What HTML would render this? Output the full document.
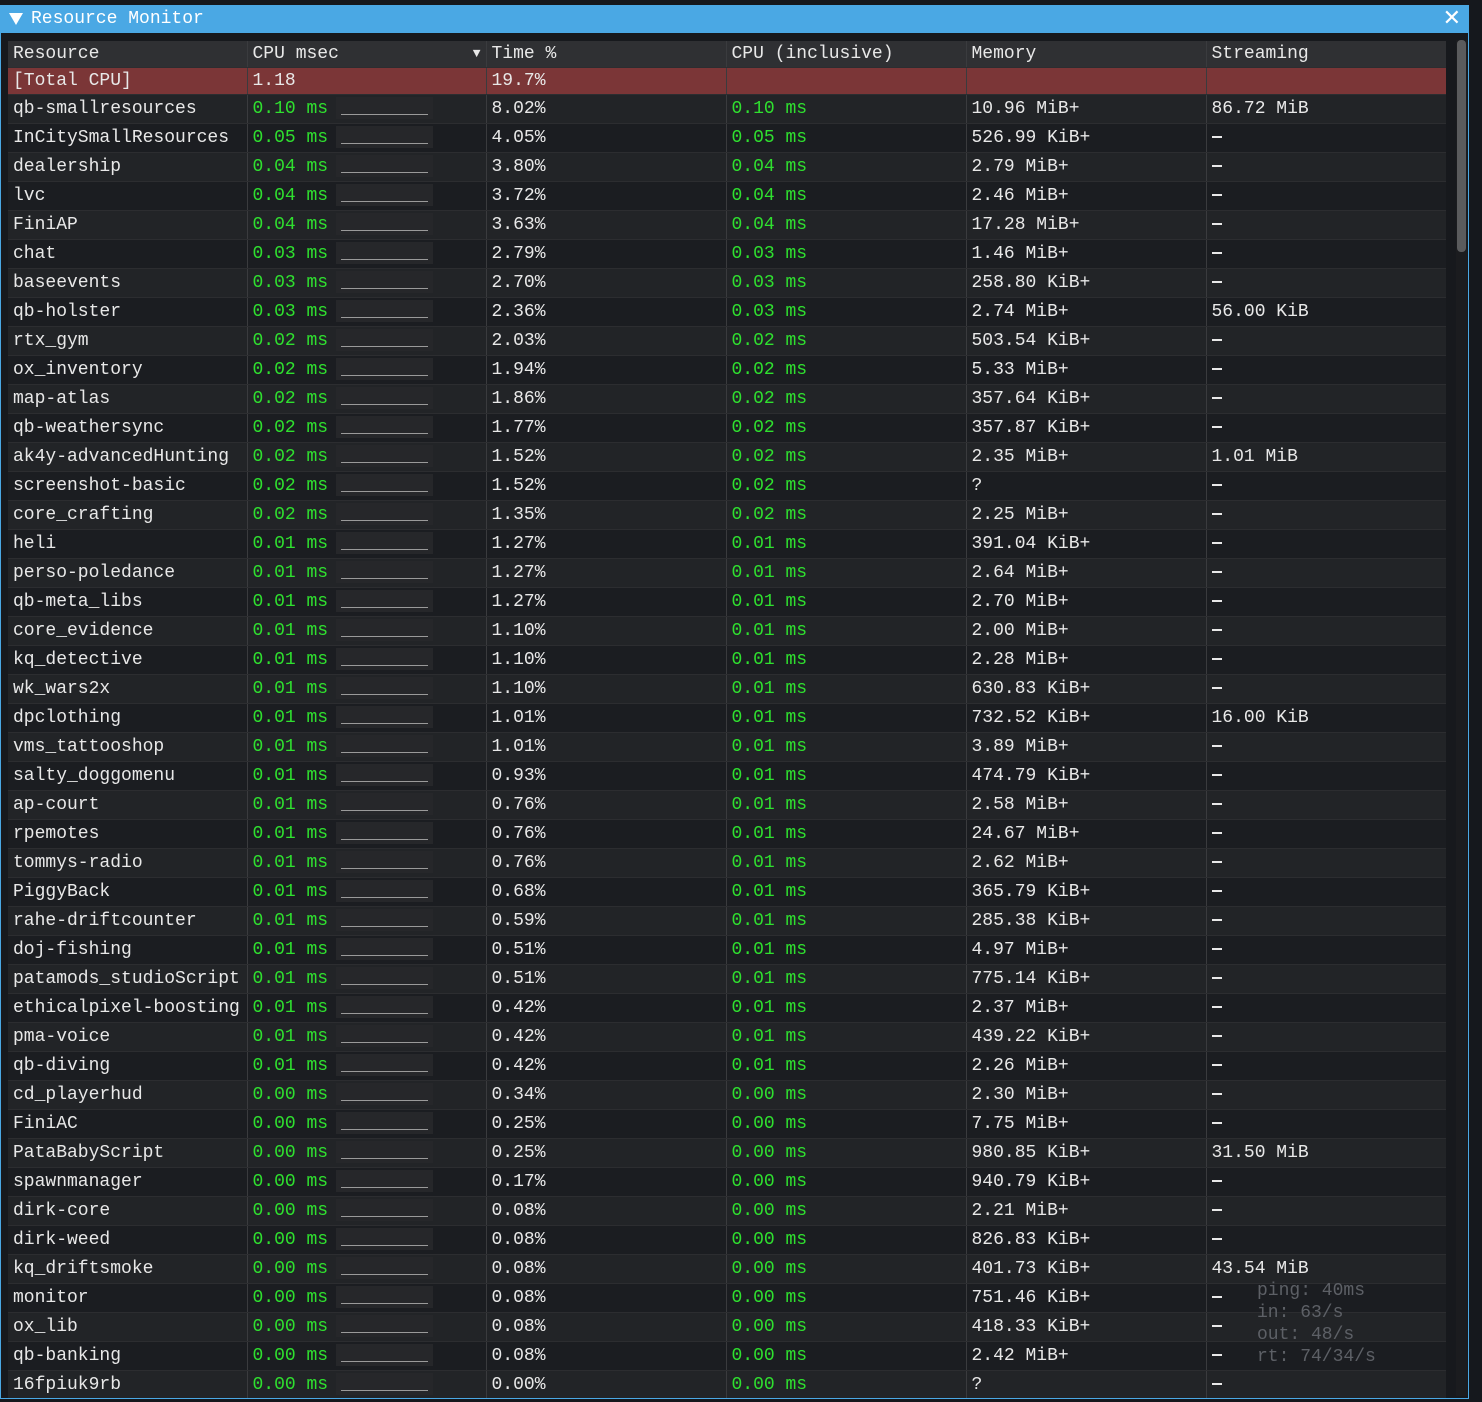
<!DOCTYPE html>
<html><head><meta charset="utf-8"><style>
*{margin:0;padding:0;box-sizing:border-box}
body{width:1482px;height:1402px;background:#15181d;font-family:"Liberation Mono",monospace;font-size:18px;color:#e8e8e8;position:relative;overflow:hidden}
#tb{position:absolute;left:0;top:5px;width:1469px;height:28px;background:#4aa8e4;color:#fff;line-height:28px;padding-left:31px}
#tb .tri{position:absolute;left:9px;top:8px;width:0;height:0;border-left:7px solid transparent;border-right:7px solid transparent;border-top:12px solid #fff}
#tb .x{position:absolute;right:8px;top:0;font-family:"DejaVu Sans",sans-serif;font-size:22px;font-weight:300}
#win{position:absolute;left:0;top:33px;width:1469px;height:1366px;background:#17191d;border:1px solid #4aa8e4;border-top:none}
#sb{position:absolute;left:1456px;top:40px;width:11px;height:1356px;background:#1b1c1f}
#sb div{position:absolute;left:1px;top:0;width:9px;height:212px;background:#5a5b5d;border-radius:4px}
#wrap{position:absolute;left:8px;top:41px;width:1438px;height:1357px;overflow:hidden}
table{border-collapse:collapse;table-layout:fixed;width:1438px}
td{height:29px;padding:0 5px;white-space:nowrap;overflow:hidden;border-left:1px solid #3a3b3e;border-bottom:1px solid #2c2d30;line-height:28px}
td:first-child{border-left:none}
tr.h td{height:26px;background:#2f3033;line-height:26px}
tr.t td{height:27px;background:#7b3637;line-height:26px}
tr:nth-child(odd):not(.h):not(.t) td{background:#222427}
tr:nth-child(even):not(.h):not(.t) td{background:#1b1d21}
.g{color:#2fe02f}
.sp{display:inline-block;width:97px;height:22px;vertical-align:middle;margin-left:8px;background:#26272a;position:relative}
.sp:after{content:"";position:absolute;left:5px;right:5px;bottom:4px;height:1px;background:#9a9a9a}
.dash{display:inline-block;width:10px;height:2px;background:#e8e8e8;vertical-align:middle}
#net{position:absolute;left:1257px;top:1280px;color:#5d6066;line-height:22px;font-size:18px}
</style></head><body>
<div id="win"></div>
<div id="tb"><span class="tri"></span>Resource Monitor<span class="x">✕</span></div>
<div id="sb"><div></div></div>
<div id="wrap">
<table>
<colgroup><col style="width:239px"><col style="width:239px"><col style="width:240px"><col style="width:240px"><col style="width:240px"><col style="width:240px"></colgroup>
<tr class="h"><td>Resource</td><td>CPU msec<span style="float:right;font-size:13px">▼</span></td><td>Time %</td><td>CPU (inclusive)</td><td>Memory</td><td>Streaming</td></tr>
<tr class="t"><td>[Total CPU]</td><td>1.18</td><td>19.7%</td><td></td><td></td><td></td></tr>
<tbody id="b"></tbody>
</table>
</div>
<div id="net">ping: 40ms<br>in: 63/s<br>out: 48/s<br>rt: 74/34/s</div>
<script>
var d=[
["qb-smallresources","0.10","8.02%","10.96 MiB+","86.72 MiB"],
["InCitySmallResources","0.05","4.05%","526.99 KiB+",""],
["dealership","0.04","3.80%","2.79 MiB+",""],
["lvc","0.04","3.72%","2.46 MiB+",""],
["FiniAP","0.04","3.63%","17.28 MiB+",""],
["chat","0.03","2.79%","1.46 MiB+",""],
["baseevents","0.03","2.70%","258.80 KiB+",""],
["qb-holster","0.03","2.36%","2.74 MiB+","56.00 KiB"],
["rtx_gym","0.02","2.03%","503.54 KiB+",""],
["ox_inventory","0.02","1.94%","5.33 MiB+",""],
["map-atlas","0.02","1.86%","357.64 KiB+",""],
["qb-weathersync","0.02","1.77%","357.87 KiB+",""],
["ak4y-advancedHunting","0.02","1.52%","2.35 MiB+","1.01 MiB"],
["screenshot-basic","0.02","1.52%","?",""],
["core_crafting","0.02","1.35%","2.25 MiB+",""],
["heli","0.01","1.27%","391.04 KiB+",""],
["perso-poledance","0.01","1.27%","2.64 MiB+",""],
["qb-meta_libs","0.01","1.27%","2.70 MiB+",""],
["core_evidence","0.01","1.10%","2.00 MiB+",""],
["kq_detective","0.01","1.10%","2.28 MiB+",""],
["wk_wars2x","0.01","1.10%","630.83 KiB+",""],
["dpclothing","0.01","1.01%","732.52 KiB+","16.00 KiB"],
["vms_tattooshop","0.01","1.01%","3.89 MiB+",""],
["salty_doggomenu","0.01","0.93%","474.79 KiB+",""],
["ap-court","0.01","0.76%","2.58 MiB+",""],
["rpemotes","0.01","0.76%","24.67 MiB+",""],
["tommys-radio","0.01","0.76%","2.62 MiB+",""],
["PiggyBack","0.01","0.68%","365.79 KiB+",""],
["rahe-driftcounter","0.01","0.59%","285.38 KiB+",""],
["doj-fishing","0.01","0.51%","4.97 MiB+",""],
["patamods_studioScript","0.01","0.51%","775.14 KiB+",""],
["ethicalpixel-boosting","0.01","0.42%","2.37 MiB+",""],
["pma-voice","0.01","0.42%","439.22 KiB+",""],
["qb-diving","0.01","0.42%","2.26 MiB+",""],
["cd_playerhud","0.00","0.34%","2.30 MiB+",""],
["FiniAC","0.00","0.25%","7.75 MiB+",""],
["PataBabyScript","0.00","0.25%","980.85 KiB+","31.50 MiB"],
["spawnmanager","0.00","0.17%","940.79 KiB+",""],
["dirk-core","0.00","0.08%","2.21 MiB+",""],
["dirk-weed","0.00","0.08%","826.83 KiB+",""],
["kq_driftsmoke","0.00","0.08%","401.73 KiB+","43.54 MiB"],
["monitor","0.00","0.08%","751.46 KiB+",""],
["ox_lib","0.00","0.08%","418.33 KiB+",""],
["qb-banking","0.00","0.08%","2.42 MiB+",""],
["16fpiuk9rb","0.00","0.00%","?",""]];
var h="";
d.forEach(function(r){h+='<tr><td>'+r[0]+'</td><td><span class="g">'+r[1]+' ms</span><span class="sp"></span></td><td>'+r[2]+'</td><td class="g">'+r[1]+' ms</td><td>'+r[3]+'</td><td>'+(r[4]||'<span class="dash"></span>')+'</td></tr>';});
document.getElementById("b").innerHTML=h;
</script>
</body></html>
